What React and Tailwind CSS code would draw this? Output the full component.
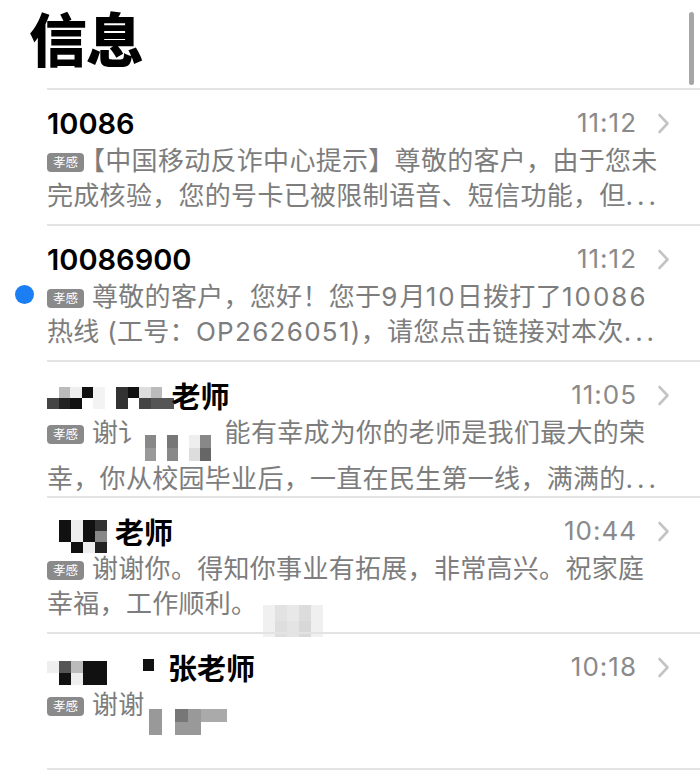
import React from "react";

const CJK = '"Noto Sans CJK SC", "Noto Sans", sans-serif';
const NUM = 'Inter, "Noto Sans CJK SC", sans-serif';
const BODY = 'Inter, "Noto Sans CJK SC", sans-serif';

function Chevron() {
  return (
    <svg width="13" height="21" viewBox="0 0 13 21" className="shrink-0">
      <path d="M2.5 2 L10.5 10.5 L2.5 19" fill="none" stroke="#c4c4c6" strokeWidth="2.6" strokeLinecap="round" strokeLinejoin="round" />
    </svg>
  );
}

function Badge() {
  return (
    <span className="inline-flex items-center justify-center rounded-[4px] bg-[#8a8a8a] text-white text-[12.5px] leading-none w-[37px] h-[19px] align-[3px] mr-[8px] tracking-normal" style={{ fontFamily: CJK }}>
      孝感
    </span>
  );
}

function Dots() {
  return <span className="tracking-[4px]">...</span>;
}

function Half({ children }) {
  return <span style={{ fontFeatureSettings: '"halt"' }}>{children}</span>;
}

function Num({ children }) {
  return <span className="tracking-[2px]">{children}</span>;
}

function Mosaic({ cols, w = 12, h = 12, className = "" }) {
  return (
    <span className={"inline-flex " + className}>
      {cols.map((c, i) => (
        <span key={i} className="flex flex-col">
          {c.map((col, j) => (
            <span key={j} className="block" style={{ width: w, height: h, background: col }} />
          ))}
        </span>
      ))}
    </span>
  );
}

function Row({ name, time, lines, dot }) {
  return (
    <div className="relative h-[136px] border-t-2 border-[#e3e3e3] ml-[47px] pr-[30px]">
      {dot && <div className="absolute left-[-32px] top-[59px] w-[19px] h-[19px] rounded-full bg-[#1b7ef2]" />}
      <div className="flex items-center justify-between pt-[12px] h-[54px]">
        <div className="text-[29px] font-semibold text-black leading-none flex items-center" style={{ fontFamily: NUM }}>
          {name}
        </div>
        <div className="flex items-center gap-[20px]">
          <span className="text-[26px] text-[#8a8a8a] leading-none tracking-[1px]" style={{ fontFamily: NUM }}>{time}</span>
          <Chevron />
        </div>
      </div>
      <div className="text-[26px] leading-[35px] text-[#7d7d7d] -mt-[1px] tracking-[0.3px] whitespace-nowrap" style={{ fontFamily: BODY }}>
        {lines}
      </div>
    </div>
  );
}

export default function App() {
  return (
    <div className="w-[700px] h-[781px] bg-white overflow-hidden relative">
      <div className="absolute right-[6px] top-[12px] w-[5px] h-[73px] rounded-full bg-[#a6a6a6]" />
      <div className="h-[88px] pl-[29px] pt-[2px]">
        <h1 className="text-[58px] font-black text-black leading-[70px] tracking-[-1px]" style={{ fontFamily: CJK }}>信息</h1>
      </div>
      <Row
        name="10086"
        time="11:12"
        lines={<><Badge /><Half>【</Half>中国移动反诈中心提示】尊敬的客户，由于您未<br />完成核验，您的号卡已被限制语音、短信功能，但<Dots /></>}
      />
      <Row
        dot
        name="10086900"
        time="11:12"
        lines={<><Badge />尊敬的客户，您好！您于<Num>9</Num>月<Num>10</Num>日拨打了<Num>10086</Num><br />热线 (工号：<span className="tracking-[1.3px]">OP2626051</span>)，请您点击链接对本次<Dots /></>}
      />
      <Row
        name={<><Mosaic cols={[["#fff","#444"],["#bbb","#222"],["#eee","#111"],["#111","#fff"],["#f3f3f3","#f3f3f3"],["#fff","#fff"],["#333","#333"],["#111","#fff"],["#ddd","#444"],["#bbb","#555"],["#fff","#555"]]} w={11.5} h={11} className="mt-[6px]" /><span style={{ fontFamily: CJK }} className="-ml-[2px]">老师</span></>}
        time="11:05"
        lines={<><Badge />谢讠<Mosaic cols={[["#888","#999"],["#fff","#fff"],["#777","#888"],["#fff","#fff"],["#eee","#ddd"],["#888","#666"]]} w={11} h={13} className="align-[-6px]" /><span className="ml-[14px]">能有幸成为你的老师是我们最大的荣</span><br />幸，你从校园毕业后，一直在民生第一线，满满的<Dots /></>}
      />
      <Row
        name={<><Mosaic cols={[["#111","#111","#fff"],["#eee","#eee","#111"],["#111","#111","#eee"],["#333","#888","#222"]]} w={12} h={11} className="mt-[10px] ml-[12px]" /><span style={{ fontFamily: CJK }} className="ml-[8px]">老师</span></>}
        time="10:44"
        lines={<><Badge />谢谢你。得知你事业有拓展，非常高兴。祝家庭<br />幸福，工作顺利。<Mosaic cols={[["#f0f0f0","#f0f0f0"],["#e2e2e2","#dedede"],["#e8e8e8","#e4e4e4"],["#dcdcdc","#d8d8d8"],["#f0f0f0","#f0f0f0"]]} w={12} h={16} className="align-[-8px] ml-[6px]" /></>}
      />
      <Row
        name={<><Mosaic cols={[["#eee","#fff"],["#555","#111"],["#bbb","#eee"],["#111","#111"],["#111","#111"]]} w={12} h={12} className="mt-[12px]" /><span className="inline-block w-[36px]" /><span className="inline-block w-[11px] h-[12px] bg-[#111] mt-[-4px]" /><span style={{ fontFamily: CJK }} className="ml-[14px]">张老师</span></>}
        time="10:18"
        lines={<><Badge />谢谢<Mosaic cols={[["#999","#999"],["#fff","#fff"],["#777","#999"],["#999","#999"],["#aaa","#fff"],["#aaa","#fff"]]} w={13} h={13} className="align-[-8px] ml-[4px]" /></>}
      />
      <div className="border-t-2 border-[#e3e3e3] ml-[47px]" />
    </div>
  );
}
